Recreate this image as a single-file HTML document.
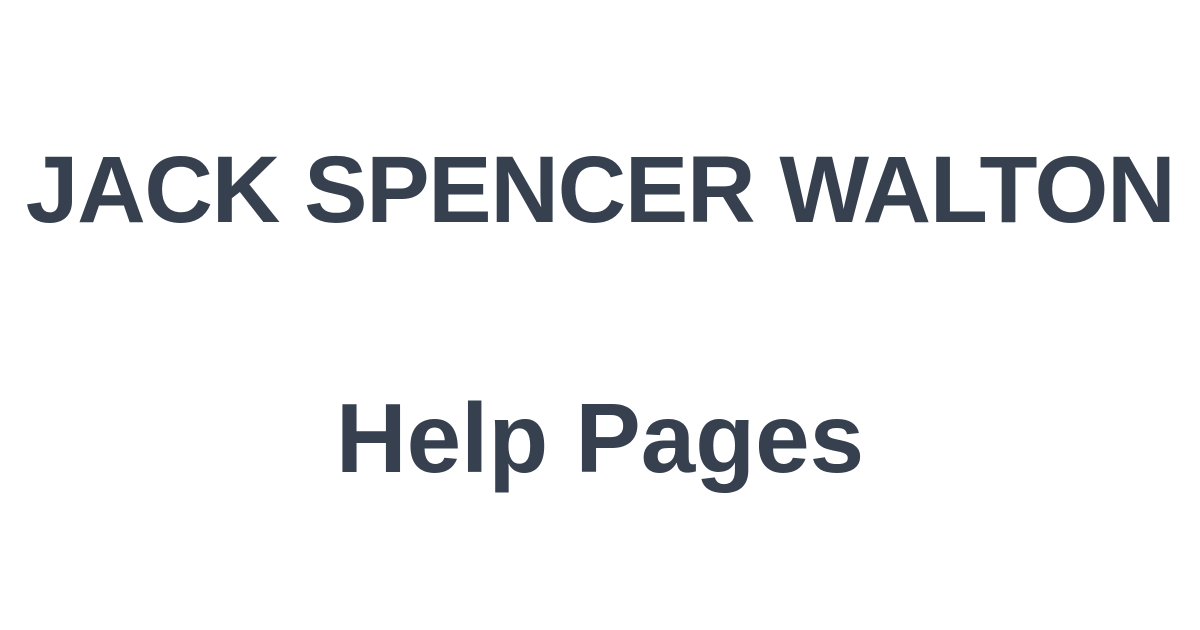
<!DOCTYPE html>
<html><head><style>
html,body{margin:0;padding:0;background:#fff;width:1200px;height:630px;overflow:hidden}
div{position:absolute;left:0;width:1200px;text-align:center;font-family:"Liberation Sans",Arial,sans-serif;font-weight:bold;color:#36404f;white-space:nowrap;line-height:1}
#t{font-size:95px;letter-spacing:-1.3px;top:143px}
#h{font-size:98px;top:389px}
</style></head><body>
<div id="t">JACK SPENCER WALTON</div>
<div id="h">Help Pages</div>
</body></html>
